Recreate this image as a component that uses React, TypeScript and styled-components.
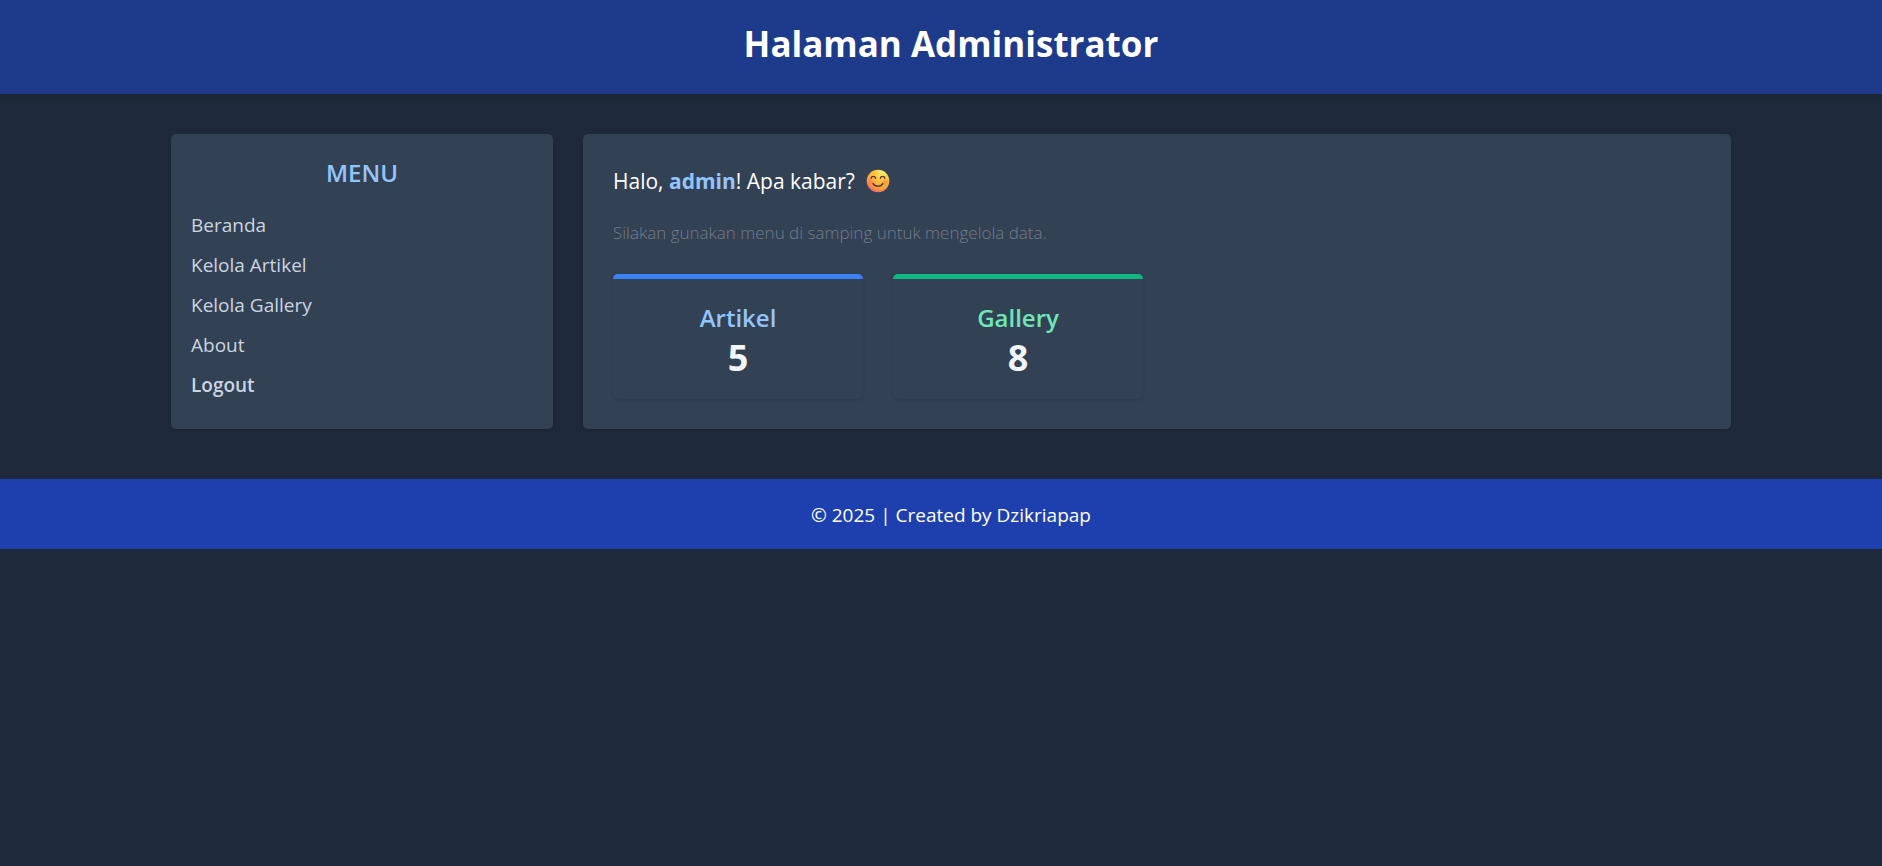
import React from "react";
import styled, { createGlobalStyle } from "styled-components";

const GlobalStyle = createGlobalStyle`
  *, *::before, *::after { box-sizing: border-box; }
  body {
    margin: 0;
    background: #1e293b;
    color: #ffffff;
    font-family: "Segoe UI", "Open Sans", "Noto Sans", sans-serif;
    font-size: 19px;
    line-height: 30px;
  }
  h1, h2, h3, p, ul { margin: 0; padding: 0; }
`;

const Header = styled.header`
  padding: 21px 20px 28px 40px;
  background: #1e3a8a;
  text-align: center;
  box-shadow: 0 4px 6px rgba(0, 0, 0, 0.1);
`;

const Title = styled.h1`
  font-size: 35px;
  line-height: 45px;
  font-weight: 700;
`;

const Body = styled.div`
  padding: 40px 20px 50px 40px;
`;

const Columns = styled.div`
  display: grid;
  grid-template-columns: 382fr 1148fr;
  gap: 30px;
  max-width: 1560px;
  margin: 0 auto;

  @media (max-width: 800px) {
    grid-template-columns: 1fr;
  }
`;

const Panel = styled.div<{ $pad: string }>`
  padding: ${(p) => p.$pad};
  background: #334155;
  border-radius: 5px;
  box-shadow: 0 1px 3px rgba(0, 0, 0, 0.12);
`;

const MenuTitle = styled.h2`
  margin-bottom: 20px;
  color: #93c5fd;
  font-size: 24px;
  line-height: 35px;
  font-weight: 600;
  text-align: center;
`;

const MenuList = styled.ul`
  display: flex;
  flex-direction: column;
  gap: 10px;
  list-style: none;
`;

const MenuLink = styled.a<{ $strong?: boolean }>`
  color: #cbd5e1;
  font-weight: ${(p) => (p.$strong ? 600 : 400)};
  text-decoration: none;

  &:hover { color: #93c5fd; }
`;

const Greeting = styled.p`
  margin-bottom: 19px;
  font-size: 21px;
  line-height: 35px;

  strong { color: #93c5fd; font-weight: 700; }
`;

const Smile = styled.svg`
  width: 24px;
  height: 24px;
  margin-left: 6px;
  vertical-align: -4px;
`;

const Hint = styled.p`
  margin-bottom: 26px;
  color: #747b89;
  font-size: 17px;
  font-weight: 300;
`;

const Cards = styled.div`
  display: flex;
  flex-wrap: wrap;
  gap: 30px;
`;

const Card = styled.section<{ $edge: string }>`
  width: 250px;
  padding: 21px 20px 18px;
  border-top: 5px solid ${(p) => p.$edge};
  border-radius: 5px;
  text-align: center;
  box-shadow: 0 1px 3px rgba(0, 0, 0, 0.12);
`;

const CardTitle = styled.h3<{ $color: string }>`
  color: ${(p) => p.$color};
  font-size: 24px;
  line-height: 35px;
  font-weight: 600;
`;

const CardCount = styled.p`
  color: #f1f5f9;
  font-size: 36px;
  line-height: 46px;
  font-weight: 700;
`;

const Footer = styled.footer`
  padding: 21px 20px 19px 40px;
  background: #1e40af;
  text-align: center;
`;

const menu = [
  { label: "Beranda" },
  { label: "Kelola Artikel" },
  { label: "Kelola Gallery" },
  { label: "About" },
  { label: "Logout", strong: true },
];

const stats = [
  { title: "Artikel", count: 5, edge: "#3b82f6", color: "#93c5fd" },
  { title: "Gallery", count: 8, edge: "#10b981", color: "#6ee7b7" },
];

const SmileFace = () => (
  <Smile viewBox="0 0 24 24" role="img" aria-label="😊">
    <defs>
      <radialGradient id="face" cx="0.72" cy="0.12" r="0.95">
        <stop offset="0" stopColor="#fff06a" />
        <stop offset="0.45" stopColor="#fdc13c" />
        <stop offset="0.8" stopColor="#f99a3c" />
        <stop offset="1" stopColor="#ee5f78" />
      </radialGradient>
      <radialGradient id="cheek">
        <stop offset="0" stopColor="#ff6b57" stopOpacity="0.65" />
        <stop offset="1" stopColor="#ff6b57" stopOpacity="0" />
      </radialGradient>
    </defs>
    <circle cx="12" cy="12" r="11.3" fill="url(#face)" />
    <circle cx="4.8" cy="13" r="4" fill="url(#cheek)" />
    <circle cx="19.2" cy="13" r="4" fill="url(#cheek)" />
    <g fill="none" stroke="#5a2d3c" strokeWidth="1.4" strokeLinecap="round">
      <path d="M5.2 9.2C5.6 6.7 9 6.7 9.6 9.2" />
      <path d="M14.4 9.2C15 6.7 18.4 6.7 18.8 9.2" />
      <path d="M7.2 14.6C9 18 15 18 16.8 14.6" />
    </g>
  </Smile>
);

export default function App() {
  return (
    <>
      <GlobalStyle />
      <Header>
        <Title>Halaman Administrator</Title>
      </Header>
      <Body>
        <Columns>
          <Panel as="nav" $pad="21px 20px 29px" aria-label="Menu">
            <MenuTitle>MENU</MenuTitle>
            <MenuList>
              {menu.map((m) => (
                <li key={m.label}>
                  <MenuLink href="#" $strong={m.strong}>{m.label}</MenuLink>
                </li>
              ))}
            </MenuList>
          </Panel>
          <Panel as="main" $pad="30px">
            <Greeting>
              Halo, <strong>admin</strong>! Apa kabar? <SmileFace />
            </Greeting>
            <Hint>Silakan gunakan menu di samping untuk mengelola data.</Hint>
            <Cards>
              {stats.map((s) => (
                <Card key={s.title} $edge={s.edge}>
                  <CardTitle $color={s.color}>{s.title}</CardTitle>
                  <CardCount>{s.count}</CardCount>
                </Card>
              ))}
            </Cards>
          </Panel>
        </Columns>
      </Body>
      <Footer>
        <p>© 2025 | Created by Dzikriapap</p>
      </Footer>
    </>
  );
}
